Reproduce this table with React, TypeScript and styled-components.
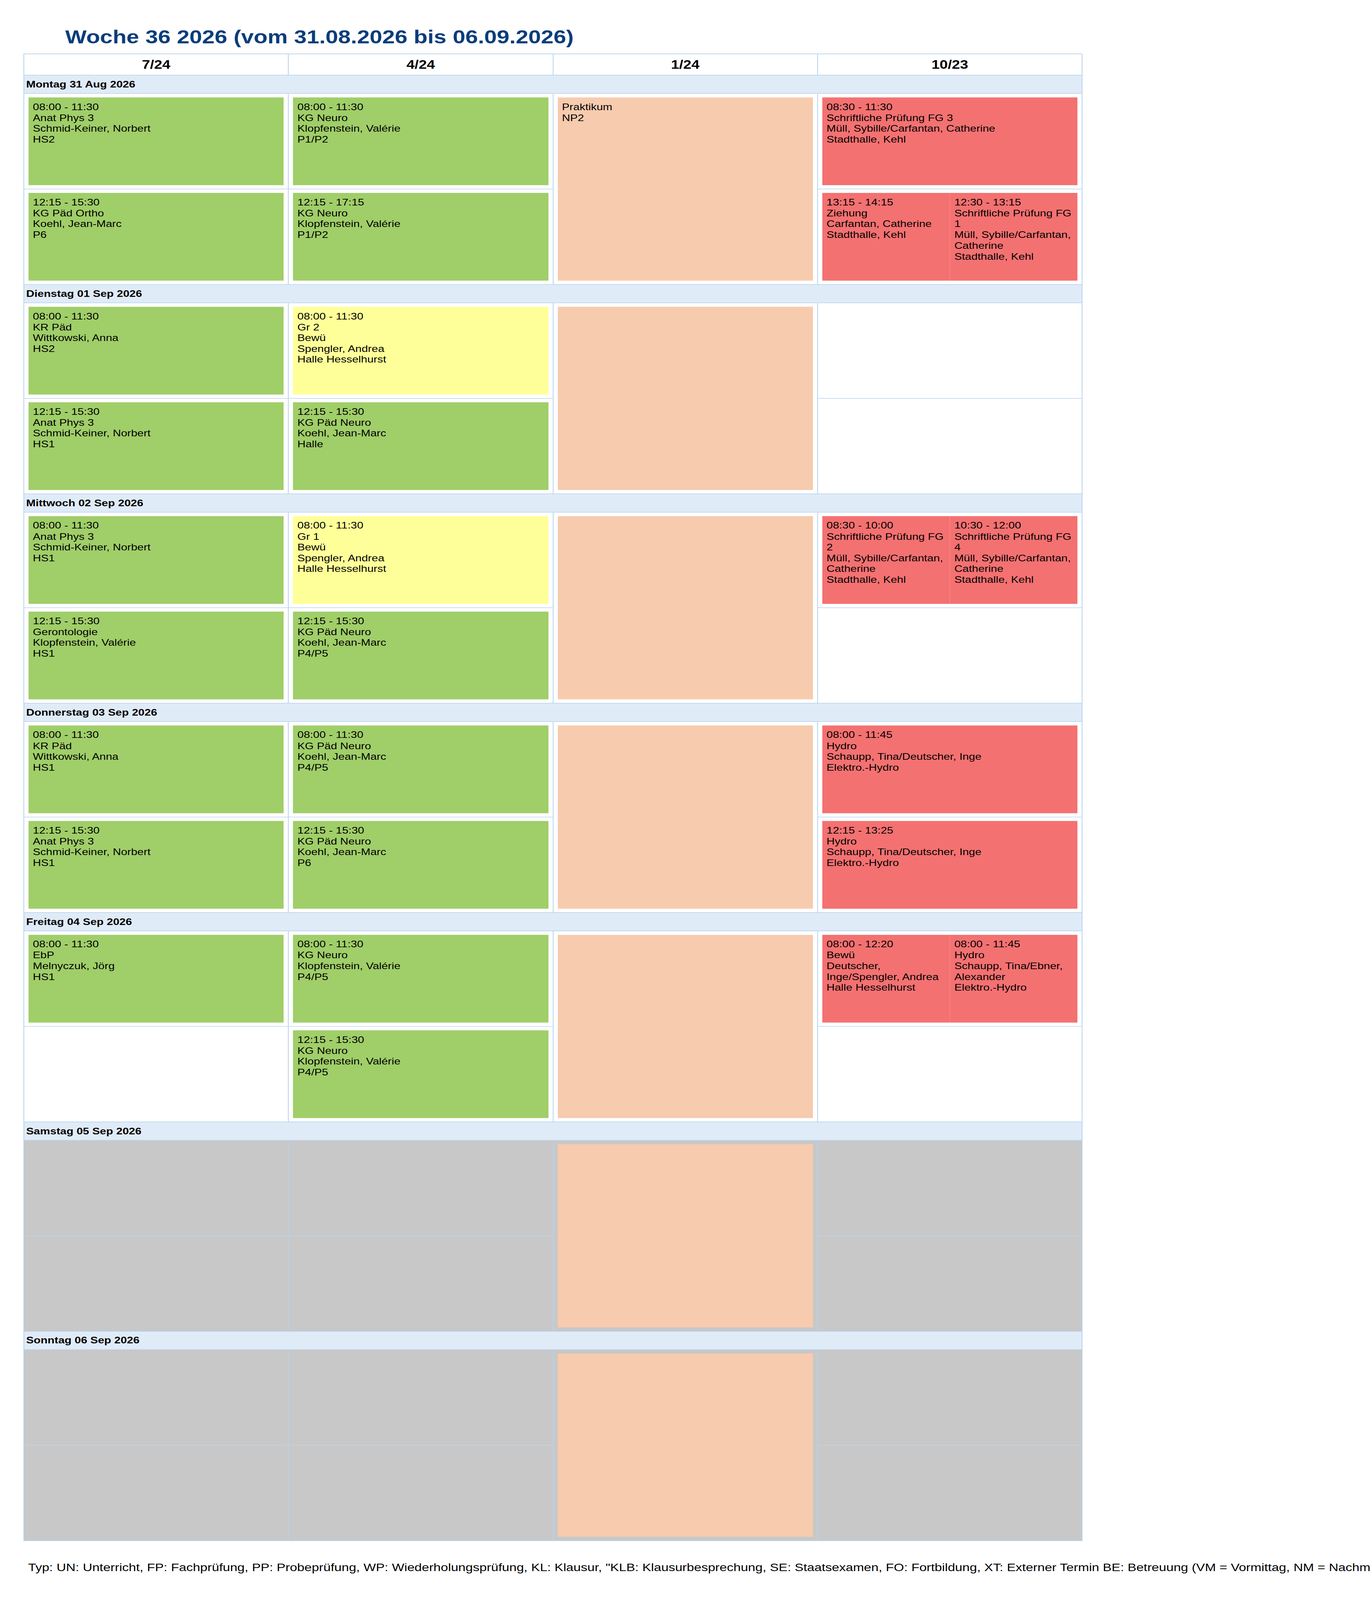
import React, { useEffect, useState } from 'react';
import styled, { createGlobalStyle } from 'styled-components';

type Tone = 'green' | 'yellow' | 'red' | 'peach';

interface Entry {
  tone: Tone;
  lines: string[];
}

// a slot holds nothing, or one or more entries shown side by side
type Slot = Entry[] | null;

interface Day {
  label: string;
  weekend?: boolean;
  practice: string[];
  slots: [Slot, Slot][]; // columns 1, 2 and 4 (column 3 is the practice block)
}

// the sheet is drawn on an A3 page of 3507 x 4960 px
const SHEET_W = 3507;
const SHEET_H = 4960;

const toneColors: Record<Tone, string> = {
  green: '#a0ce69',
  yellow: '#ffff99',
  red: '#f47171',
  peach: '#f7cbae',
};

const line = '#b6d3eb';

const columns = ['7/24', '4/24', '1/24', '10/23'];

const g = (...lines: string[]): Entry[] => [{ tone: 'green', lines }];
const y = (...lines: string[]): Entry[] => [{ tone: 'yellow', lines }];
const r = (...lines: string[]): Entry => ({ tone: 'red', lines });

const days: Day[] = [
  {
    label: 'Montag 31 Aug 2026',
    practice: ['Praktikum', 'NP2'],
    slots: [
      [
        g('08:00 - 11:30', 'Anat Phys 3', 'Schmid-Keiner, Norbert', 'HS2'),
        g('12:15 - 15:30', 'KG Päd Ortho', 'Koehl, Jean-Marc', 'P6'),
      ],
      [
        g('08:00 - 11:30', 'KG Neuro', 'Klopfenstein, Valérie', 'P1/P2'),
        g('12:15 - 17:15', 'KG Neuro', 'Klopfenstein, Valérie', 'P1/P2'),
      ],
      [
        [r('08:30 - 11:30', 'Schriftliche Prüfung FG 3', 'Müll, Sybille/Carfantan, Catherine', 'Stadthalle, Kehl')],
        [
          r('13:15 - 14:15', 'Ziehung', 'Carfantan, Catherine', 'Stadthalle, Kehl'),
          r('12:30 - 13:15', 'Schriftliche Prüfung FG', '1', 'Müll, Sybille/Carfantan,', 'Catherine', 'Stadthalle, Kehl'),
        ],
      ],
    ],
  },
  {
    label: 'Dienstag 01 Sep 2026',
    practice: [],
    slots: [
      [
        g('08:00 - 11:30', 'KR Päd', 'Wittkowski, Anna', 'HS2'),
        g('12:15 - 15:30', 'Anat Phys 3', 'Schmid-Keiner, Norbert', 'HS1'),
      ],
      [
        y('08:00 - 11:30', 'Gr 2', 'Bewü', 'Spengler, Andrea', 'Halle Hesselhurst'),
        g('12:15 - 15:30', 'KG Päd Neuro', 'Koehl, Jean-Marc', 'Halle'),
      ],
      [null, null],
    ],
  },
  {
    label: 'Mittwoch 02 Sep 2026',
    practice: [],
    slots: [
      [
        g('08:00 - 11:30', 'Anat Phys 3', 'Schmid-Keiner, Norbert', 'HS1'),
        g('12:15 - 15:30', 'Gerontologie', 'Klopfenstein, Valérie', 'HS1'),
      ],
      [
        y('08:00 - 11:30', 'Gr 1', 'Bewü', 'Spengler, Andrea', 'Halle Hesselhurst'),
        g('12:15 - 15:30', 'KG Päd Neuro', 'Koehl, Jean-Marc', 'P4/P5'),
      ],
      [
        [
          r('08:30 - 10:00', 'Schriftliche Prüfung FG', '2', 'Müll, Sybille/Carfantan,', 'Catherine', 'Stadthalle, Kehl'),
          r('10:30 - 12:00', 'Schriftliche Prüfung FG', '4', 'Müll, Sybille/Carfantan,', 'Catherine', 'Stadthalle, Kehl'),
        ],
        null,
      ],
    ],
  },
  {
    label: 'Donnerstag 03 Sep 2026',
    practice: [],
    slots: [
      [
        g('08:00 - 11:30', 'KR Päd', 'Wittkowski, Anna', 'HS1'),
        g('12:15 - 15:30', 'Anat Phys 3', 'Schmid-Keiner, Norbert', 'HS1'),
      ],
      [
        g('08:00 - 11:30', 'KG Päd Neuro', 'Koehl, Jean-Marc', 'P4/P5'),
        g('12:15 - 15:30', 'KG Päd Neuro', 'Koehl, Jean-Marc', 'P6'),
      ],
      [
        [r('08:00 - 11:45', 'Hydro', 'Schaupp, Tina/Deutscher, Inge', 'Elektro.-Hydro')],
        [r('12:15 - 13:25', 'Hydro', 'Schaupp, Tina/Deutscher, Inge', 'Elektro.-Hydro')],
      ],
    ],
  },
  {
    label: 'Freitag 04 Sep 2026',
    practice: [],
    slots: [
      [g('08:00 - 11:30', 'EbP', 'Melnyczuk, Jörg', 'HS1'), null],
      [
        g('08:00 - 11:30', 'KG Neuro', 'Klopfenstein, Valérie', 'P4/P5'),
        g('12:15 - 15:30', 'KG Neuro', 'Klopfenstein, Valérie', 'P4/P5'),
      ],
      [
        [
          r('08:00 - 12:20', 'Bewü', 'Deutscher,', 'Inge/Spengler, Andrea', 'Halle Hesselhurst'),
          r('08:00 - 11:45', 'Hydro', 'Schaupp, Tina/Ebner,', 'Alexander', 'Elektro.-Hydro'),
        ],
        null,
      ],
    ],
  },
  {
    label: 'Samstag 05 Sep 2026',
    weekend: true,
    practice: [],
    slots: [[null, null], [null, null], [null, null]],
  },
  {
    label: 'Sonntag 06 Sep 2026',
    weekend: true,
    practice: [],
    slots: [[null, null], [null, null], [null, null]],
  },
];

const GlobalStyle = createGlobalStyle`
  html, body {
    margin: 0;
    padding: 0;
    background: #fff;
  }
  body {
    font-family: "Liberation Sans", Arial, sans-serif;
    color: #000;
    overflow: hidden;
  }
`;

// clips the scaled sheet to the window so nothing scrolls
const Frame = styled.div`
  width: 100vw;
  height: 100vh;
  overflow: hidden;
`;

const Page = styled.div`
  width: ${SHEET_W}px;
  height: ${SHEET_H}px;
  box-sizing: border-box;
  padding-top: 82px;
  transform-origin: 0 0;
`;

const Title = styled.h1`
  margin: 0 0 18px 167px;
  font-size: 58px;
  line-height: 66px;
  font-weight: 700;
  color: #0b3d7b;
`;

const Table = styled.div`
  width: 2711px;
  margin-left: 60px;
  box-sizing: border-box;
  border-left: 2px solid ${line};
  border-top: 2px solid ${line};
`;

const HeadRow = styled.div`
  display: grid;
  grid-template-columns: repeat(4, 1fr);
  height: 66px;
`;

const HeadCell = styled.div`
  display: flex;
  align-items: center;
  justify-content: center;
  border-right: 2px solid ${line};
  border-bottom: 2px solid ${line};
  font-size: 37.5px;
  font-weight: 700;
`;

const DayBar = styled.div`
  display: flex;
  align-items: center;
  box-sizing: border-box;
  height: 57px;
  padding-left: 5px;
  background: #e0ebf8;
  border-right: 2px solid ${line};
  border-bottom: 2px solid ${line};
  font-size: 29px;
  font-weight: 700;
`;

const DayGrid = styled.div`
  display: grid;
  grid-template-columns: repeat(4, 1fr);
  grid-template-rows: 296px 296px;
`;

const Cell = styled.div<{ $weekend?: boolean; $span?: boolean }>`
  box-sizing: border-box;
  min-width: 0;
  padding: 11px;
  background: ${(p) => (p.$weekend ? '#c8c8c8' : '#fff')};
  border-right: 2px solid ${line};
  border-bottom: 2px solid ${line};
  grid-row: ${(p) => (p.$span ? 'span 2' : 'auto')};
`;

const EventRow = styled.div`
  display: flex;
  height: 100%;
`;

const EventBox = styled.div<{ $tone: Tone }>`
  flex: 1 1 0;
  min-width: 0;
  box-sizing: border-box;
  padding: 13px 11px;
  background: ${(p) => toneColors[p.$tone]};
  font-size: 29px;
  line-height: 33.5px;

  & + & {
    border-left: 1px solid rgba(255, 255, 255, 0.22);
  }
`;

const Footer = styled.div`
  margin: 63px 0 0 72px;
  font-size: 33.6px;
  line-height: 38px;
  white-space: nowrap;
  overflow: hidden;
`;

// the window may be smaller than the sheet; fit the whole sheet into it
const useSheetScale = () => {
  const read = () => ({
    x: window.innerWidth / SHEET_W,
    y: window.innerHeight / SHEET_H,
  });
  const [scale, setScale] = useState(read);
  useEffect(() => {
    const onResize = () => setScale(read());
    window.addEventListener('resize', onResize);
    return () => window.removeEventListener('resize', onResize);
  }, []);
  return scale;
};

const SlotCell: React.FC<{ slot: Slot; weekend?: boolean }> = ({ slot, weekend }) => (
  <Cell $weekend={weekend}>
    {slot && (
      <EventRow>
        {slot.map((entry, i) => (
          <EventBox key={i} $tone={entry.tone}>
            {entry.lines.map((text, j) => (
              <div key={j}>{text}</div>
            ))}
          </EventBox>
        ))}
      </EventRow>
    )}
  </Cell>
);

const DaySection: React.FC<{ day: Day }> = ({ day }) => {
  const [c1, c2, c4] = day.slots;
  return (
    <>
      <DayBar>{day.label}</DayBar>
      <DayGrid>
        <SlotCell slot={c1[0]} weekend={day.weekend} />
        <SlotCell slot={c2[0]} weekend={day.weekend} />
        <Cell $span $weekend={day.weekend}>
          <EventRow>
            <EventBox $tone="peach">
              {day.practice.map((text, j) => (
                <div key={j}>{text}</div>
              ))}
            </EventBox>
          </EventRow>
        </Cell>
        <SlotCell slot={c4[0]} weekend={day.weekend} />
        <SlotCell slot={c1[1]} weekend={day.weekend} />
        <SlotCell slot={c2[1]} weekend={day.weekend} />
        <SlotCell slot={c4[1]} weekend={day.weekend} />
      </DayGrid>
    </>
  );
};

const App: React.FC = () => {
  const scale = useSheetScale();
  return (
    <Frame>
      <GlobalStyle />
      <Page style={{ transform: `scale(${scale.x}, ${scale.y})` }}>
        <Title>Woche 36 2026 (vom 31.08.2026 bis 06.09.2026)</Title>
        <Table>
          <HeadRow>
            {columns.map((c) => (
              <HeadCell key={c}>{c}</HeadCell>
            ))}
          </HeadRow>
          {days.map((day) => (
            <DaySection key={day.label} day={day} />
          ))}
        </Table>
        <Footer>
          Typ: UN: Unterricht, FP: Fachprüfung, PP: Probeprüfung, WP: Wiederholungsprüfung, KL: Klausur, "KLB: Klausurbesprechung, SE: Staatsexamen, FO: Fortbildung, XT: Externer Termin BE: Betreuung (VM = Vormittag, NM = Nachmittag)
        </Footer>
      </Page>
    </Frame>
  );
};

export default App;
